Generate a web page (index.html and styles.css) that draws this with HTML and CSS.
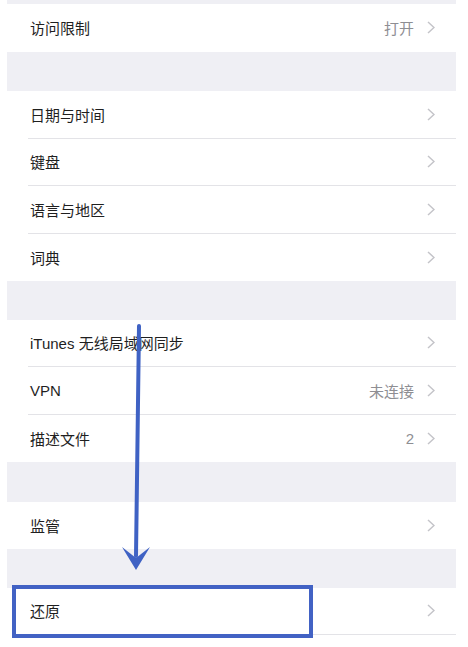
FILE: index.html
```html
<!DOCTYPE html>
<html lang="zh-CN">
<head>
    <meta charset="UTF-8">
    <meta name="viewport" content="width=device-width, initial-scale=1.0">
    <title>通用</title>
    <link rel="stylesheet" href="styles.css">
</head>
<body>
    <!-- Settings list -->
    <div class="settings">
        <div class="gap gap-top"></div>
        <div class="group">
            <div class="cell">
                <div class="cell-body">
                    <span class="label">访问限制</span>
                    <span class="detail">打开</span>
                    <svg class="chevron" viewBox="0 0 8 13"><polyline points="1,1 7,6.5 1,12"/></svg>
                </div>
            </div>
        </div>

        <div class="gap gap-a"></div>
        <div class="group">
            <div class="cell">
                <div class="cell-body">
                    <span class="label">日期与时间</span>
                    <svg class="chevron" viewBox="0 0 8 13"><polyline points="1,1 7,6.5 1,12"/></svg>
                </div>
            </div>
            <div class="cell">
                <div class="cell-body">
                    <span class="label">键盘</span>
                    <svg class="chevron" viewBox="0 0 8 13"><polyline points="1,1 7,6.5 1,12"/></svg>
                </div>
            </div>
            <div class="cell">
                <div class="cell-body">
                    <span class="label">语言与地区</span>
                    <svg class="chevron" viewBox="0 0 8 13"><polyline points="1,1 7,6.5 1,12"/></svg>
                </div>
            </div>
            <div class="cell">
                <div class="cell-body">
                    <span class="label">词典</span>
                    <svg class="chevron" viewBox="0 0 8 13"><polyline points="1,1 7,6.5 1,12"/></svg>
                </div>
            </div>
        </div>

        <div class="gap gap-b"></div>
        <div class="group">
            <div class="cell">
                <div class="cell-body">
                    <span class="label">iTunes 无线局域网同步</span>
                    <svg class="chevron" viewBox="0 0 8 13"><polyline points="1,1 7,6.5 1,12"/></svg>
                </div>
            </div>
            <div class="cell">
                <div class="cell-body">
                    <span class="label">VPN</span>
                    <span class="detail">未连接</span>
                    <svg class="chevron" viewBox="0 0 8 13"><polyline points="1,1 7,6.5 1,12"/></svg>
                </div>
            </div>
            <div class="cell">
                <div class="cell-body">
                    <span class="label">描述文件</span>
                    <span class="detail">2</span>
                    <svg class="chevron" viewBox="0 0 8 13"><polyline points="1,1 7,6.5 1,12"/></svg>
                </div>
            </div>
        </div>

        <div class="gap gap-a"></div>
        <div class="group">
            <div class="cell">
                <div class="cell-body">
                    <span class="label">监管</span>
                    <svg class="chevron" viewBox="0 0 8 13"><polyline points="1,1 7,6.5 1,12"/></svg>
                </div>
            </div>
        </div>

        <div class="gap gap-b"></div>
        <div class="group group-last">
            <div class="cell">
                <div class="cell-body">
                    <span class="label">还原</span>
                    <svg class="chevron" viewBox="0 0 8 13"><polyline points="1,1 7,6.5 1,12"/></svg>
                </div>
            </div>
        </div>
    </div>

    <!-- Hand-drawn pointer to the reset row -->
    <svg class="pointer" viewBox="0 0 468 647">
        <line x1="139" y1="326" x2="136" y2="556"/>
        <polygon points="122,547 136,558 150,547 136,570"/>
    </svg>
    <div class="mark-box"></div>
</body>
</html>
```

FILE: styles.css
```css
body {
    margin: 0;
    background: #fff;
    font-family: "Liberation Sans", "Noto Sans CJK SC", sans-serif;
    color: #1f1f1f;
}
.settings {
    margin-left: 7px;
    width: 449px;
}
.gap {
    background-color: #efeff4;
}
.gap-top {
    height: 4px;
}
.gap-a {
    height: 39.5px;
}
.gap-b {
    height: 38.5px;
}
.group {
    background: #fff;
}
.cell {
    padding-left: 21px;
}
.cell-body {
    display: flex;
    align-items: center;
    height: 46.5px;
    padding: 0 21px 0 2px;
    border-bottom: 1px solid #e3e3e7;
}
.group .cell:last-child .cell-body {
    border-bottom: none;
    height: 47.5px;
}
.group-last .cell:last-child .cell-body {
    border-bottom: 1px solid #e3e3e7;
    height: 46.5px;
}
.label {
    flex: 1;
    font-size: 15px;
}
.detail {
    font-size: 15px;
    color: #8e8e93;
    margin-right: 13px;
}
.chevron {
    width: 8px;
    height: 13px;
    fill: none;
    stroke: #c4c4c9;
    stroke-width: 1.5;
}
.pointer {
    position: absolute;
    left: 0;
    top: 0;
    width: 468px;
    height: 647px;
}
.pointer line {
    stroke: #3f62c4;
    stroke-width: 4;
    stroke-linecap: round;
}
.pointer polygon {
    fill: #3f62c4;
}
.mark-box {
    position: absolute;
    left: 12px;
    top: 585px;
    width: 301px;
    height: 53px;
    box-sizing: border-box;
    border: 4px solid #4262c4;
}
```
